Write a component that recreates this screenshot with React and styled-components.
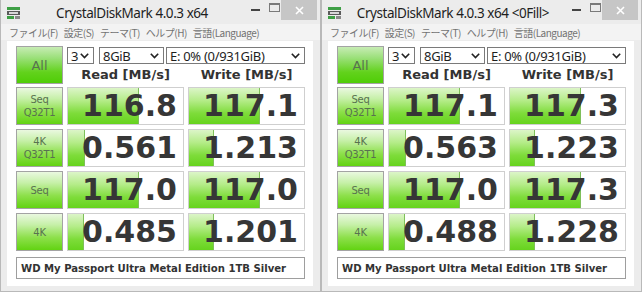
import React from "react";
import styled, { createGlobalStyle } from "styled-components";

const GlobalStyle = createGlobalStyle`
  html, body { margin: 0; padding: 0; background: #d9d9d9; }
  * { box-sizing: border-box; }
`;

const Screen = styled.div`
  display: flex;
  width: 642px;
  height: 292px;
  overflow: hidden;
`;

const Window = styled.div`
  width: 321px;
  height: 292px;
  display: flex;
  flex-direction: column;
  background: #ececec;
  border: 1px solid #b9b9b9;
  border-top: none;
`;

const TitleBar = styled.div`
  height: 24px;
  display: flex;
  align-items: flex-start;
`;

const AppIcon = styled.div`
  width: 13px;
  height: 12px;
  margin: 7px 0 0 6px;
  display: flex;
`;

const Title = styled.div`
  flex: 1;
  text-align: center;
  font-family: "Noto Sans", "Open Sans", sans-serif;
  font-size: 13.5px;
  letter-spacing: -0.45px;
  color: #1e1e1e;
  line-height: 26px;
  white-space: nowrap;
`;

const Controls = styled.div`
  display: flex;
  align-items: flex-start;
  margin-right: 3px;
`;

const CtrlBtn = styled.div`
  width: ${(p) => p.$w}px;
  height: 20px;
  display: flex;
  align-items: center;
  justify-content: center;
  background: ${(p) => (p.$close ? "#c6c6c6" : "transparent")};
`;

const MenuBar = styled.div`
  height: 16px;
  display: flex;
  align-items: center;
  gap: 6px;
  padding-left: 8px;
  font-family: "Noto Sans CJK JP", "Noto Sans", sans-serif;
  font-size: 10px;
  letter-spacing: -0.5px;
  color: #727272;
  background: #f3f3f3;
  margin: 0 0 1px 0;
`;

const Panel = styled.div`
  background: #ffffff;
  margin: 0 7px 0 6px;
  height: 245px;
  padding: 5px 8px 7px 9px;
  display: flex;
  flex-direction: column;
`;

const TopRow = styled.div`
  display: grid;
  grid-template-columns: 47px 238px;
  column-gap: 4px;
  height: 38px;
`;

const GreenButton = styled.div`
  border: 1px solid #a3a3a3;
  background: ${(p) =>
    p.$strong
      ? "linear-gradient(to bottom, #c7ecb4 0%, #9be07a 30%, #62d21c 70%, #4fcd06 100%)"
      : "linear-gradient(to bottom, #eaf8e0 0%, #c6f0a8 30%, #8ee04c 65%, #62d312 100%)"};
  display: flex;
  flex-direction: column;
  align-items: center;
  justify-content: center;
  font-family: "DejaVu Sans", sans-serif;
  font-size: ${(p) => (p.$strong ? "13px" : "10px")};
  letter-spacing: ${(p) => (p.$strong ? "0" : "-0.3px")};
  line-height: 13px;
  color: #587250;
  height: 38px;
`;

const RightTop = styled.div`
  display: flex;
  flex-direction: column;
`;

const Selects = styled.div`
  display: flex;
  margin-top: 1px;
  height: 17px;
`;

const SelectBox = styled.div`
  width: ${(p) => p.$w}px;
  margin-right: ${(p) => p.$mr}px;
  height: 17px;
  border: 1px solid #7a7a7a;
  display: flex;
  align-items: center;
  justify-content: space-between;
  padding: 0 4px 0 3px;
  font-family: "Noto Sans", "Open Sans", sans-serif;
  font-size: 13px;
  letter-spacing: -0.3px;
  color: #1e1e1e;
  background: #fff;
  white-space: nowrap;
`;

const Headers = styled.div`
  display: grid;
  grid-template-columns: 117px 117px;
  column-gap: 4px;
  flex: 1;
`;

const Header = styled.div`
  text-align: center;
  font-family: "DejaVu Sans", sans-serif;
  font-weight: bold;
  font-size: 13px;
  line-height: 21px;
  color: #333333;
`;

const Grid = styled.div`
  display: grid;
  grid-template-columns: 47px 117px 117px;
  grid-auto-rows: 38px;
  column-gap: 4px;
  row-gap: 4px;
  margin-top: 3px;
`;

const Cell = styled.div`
  position: relative;
  border: 1px solid #cfcfcf;
  background: #fff;
  overflow: hidden;
`;

const Bar = styled.div`
  position: absolute;
  left: 0;
  top: 0;
  bottom: 0;
  background: linear-gradient(to bottom, #dcf5c8 0%, #b4ec88 35%, #7edc3a 70%, #66d31e 100%);
  border-right: 1px solid #7fbf5a;
`;

const Value = styled.div`
  position: relative;
  text-align: right;
  padding-right: 6px;
  font-family: "DejaVu Sans", sans-serif;
  font-weight: bold;
  font-size: 30px;
  line-height: 36px;
  color: #363636;
`;

const NameBox = styled.div`
  margin-top: 6px;
  height: 22px;
  width: 289px;
  border: 1px solid #9e9e9e;
  padding-left: 4px;
  display: flex;
  align-items: center;
  font-family: "DejaVu Sans", sans-serif;
  font-weight: bold;
  font-size: 10.1px;
  color: #333;
`;

const Chevron = () => (
  <svg width="9" height="6" viewBox="0 0 9 6">
    <path d="M0.8 0.8 L4.5 4.6 L8.2 0.8" fill="none" stroke="#222" strokeWidth="1.6" />
  </svg>
);

const Icon = () => (
  <svg width="13" height="12" viewBox="0 0 13 12">
    <rect x="0" y="0" width="13" height="3" fill="#3e9f45" />
    <rect x="0" y="4" width="13" height="4" fill="#5a5a5a" />
    <rect x="2" y="5" width="9" height="2" fill="#d8d8d8" />
    <rect x="0" y="9" width="7" height="3" fill="#3e9f45" />
    <rect x="8" y="9" width="5" height="3" fill="#8a8a8a" />
  </svg>
);

const ratio = (v) => Math.max(0, Math.min(1, Math.log10(v * 10) / 5));

const rowsLabel = [
  ["Seq", "Q32T1"],
  ["4K", "Q32T1"],
  ["Seq"],
  ["4K"],
];

const windows = [
  {
    title: "CrystalDiskMark 4.0.3 x64",
    data: [
      ["116.8", "117.1"],
      ["0.561", "1.213"],
      ["117.0", "117.0"],
      ["0.485", "1.201"],
    ],
  },
  {
    title: "CrystalDiskMark 4.0.3 x64 <0Fill>",
    data: [
      ["117.1", "117.3"],
      ["0.563", "1.223"],
      ["117.0", "117.3"],
      ["0.488", "1.228"],
    ],
  },
];

const ScoreCell = ({ v }) => (
  <Cell>
    <Bar style={{ width: `${Math.round(ratio(parseFloat(v)) * 115)}px` }} />
    <Value>{v}</Value>
  </Cell>
);

const CdmWindow = ({ title, data }) => (
  <Window>
    <TitleBar>
      <AppIcon>
        <Icon />
      </AppIcon>
      <Title>{title}</Title>
      <Controls>
        <CtrlBtn $w={23}>
          <svg width="9" height="2"><rect width="9" height="2" fill="#444" /></svg>
        </CtrlBtn>
        <CtrlBtn $w={14}>
          <svg width="11" height="9" style={{ marginTop: -6 }}>
            <rect x="0.5" y="0.5" width="10" height="8" fill="none" stroke="#7a7a7a" />
            <rect x="0.5" y="0.5" width="10" height="1.5" fill="#7a7a7a" />
          </svg>
        </CtrlBtn>
        <CtrlBtn $w={36} $close>
          <svg width="9" height="9" viewBox="0 0 9 9">
            <path d="M1 1 L8 8 M8 1 L1 8" stroke="#fff" strokeWidth="1.6" />
          </svg>
        </CtrlBtn>
      </Controls>
    </TitleBar>
    <MenuBar>
      <span>ファイル(F)</span>
      <span>設定(S)</span>
      <span>テーマ(T)</span>
      <span>ヘルプ(H)</span>
      <span>言語(Language)</span>
    </MenuBar>
    <Panel>
      <TopRow>
        <GreenButton $strong>All</GreenButton>
        <RightTop>
          <Selects>
            <SelectBox $w={27} $mr={5}>3<Chevron /></SelectBox>
            <SelectBox $w={65} $mr={2}>8GiB<Chevron /></SelectBox>
            <SelectBox $w={139} $mr={0}>E: 0% (0/931GiB)<Chevron /></SelectBox>
          </Selects>
          <Headers>
            <Header>Read [MB/s]</Header>
            <Header>Write [MB/s]</Header>
          </Headers>
        </RightTop>
      </TopRow>
      <Grid>
        {data.map((row, i) => (
          <React.Fragment key={i}>
            <GreenButton>
              {rowsLabel[i].map((t) => (
                <span key={t}>{t}</span>
              ))}
            </GreenButton>
            <ScoreCell v={row[0]} />
            <ScoreCell v={row[1]} />
          </React.Fragment>
        ))}
      </Grid>
      <NameBox>WD My Passport Ultra Metal Edition 1TB Silver</NameBox>
    </Panel>
  </Window>
);

export default function App() {
  return (
    <>
      <GlobalStyle />
      <Screen>
        {windows.map((w) => (
          <CdmWindow key={w.title} title={w.title} data={w.data} />
        ))}
      </Screen>
    </>
  );
}
